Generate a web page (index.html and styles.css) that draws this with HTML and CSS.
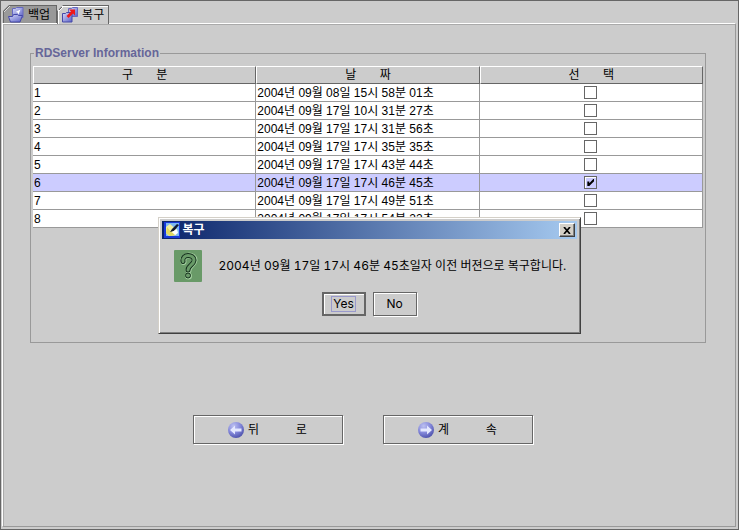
FILE: index.html
```
<!DOCTYPE html>
<html lang="ko">
<head>
<meta charset="utf-8">
<title>복구</title>
<link rel="stylesheet" href="styles.css">
</head>
<body>
<svg class="defs" width="0" height="0" aria-hidden="true">
  <defs>
    <linearGradient id="blue" x1="0" y1="0" x2="1" y2="1">
      <stop offset="0" stop-color="#d8dcfa"/>
      <stop offset="1" stop-color="#5a5fc4"/>
    </linearGradient>
    <radialGradient id="ball" cx="0.35" cy="0.25" r="0.85">
      <stop offset="0" stop-color="#bcc0f0"/>
      <stop offset="0.5" stop-color="#8488da"/>
      <stop offset="1" stop-color="#4448a4"/>
    </radialGradient>
  </defs>
</svg>
<div class="window">
  <div class="tabs" role="tablist">
    <button class="tab" type="button" role="tab" aria-selected="false">
      <svg width="16" height="16" viewBox="0 0 16 16" aria-hidden="true">
        <path d="M4.500 1.500h3l1-1h6.500v10h-10.500z" fill="url(#blue)" stroke="#6669c0"/>
        <path d="M12.500 2.500l-5 2.500 2 .5 1 2z" fill="#fff"/>
        <path d="M.5 9.500h4l1-2h4l1 1h4l-2.500 6.500H2.500z" fill="url(#blue)" stroke="#4548a8"/>
      </svg>
      <span>백업</span>
    </button>
    <button class="tab active" type="button" role="tab" aria-selected="true">
      <svg width="16" height="16" viewBox="0 0 16 16" aria-hidden="true">
        <path d="M6.500 1.500h3l1-1h5v9h-9z" fill="url(#blue)" stroke="#6669c0"/>
        <path d="M.5 6.500h3l1-1h5.500v9.500H.5z" fill="url(#blue)" stroke="#4548a8"/>
        <path d="M13 2.500v6l-2-2-4.500 4.500-2-2L9 4.500l-2-2z" fill="#f01818"/>
      </svg>
      <span>복구</span>
    </button>
  </div>
  <main class="panel">
    <fieldset class="group">
      <legend>RDServer Information</legend>
      <table class="grid">
        <thead>
          <tr><th>구       분</th><th>날       짜</th><th>선       택</th></tr>
        </thead>
        <tbody>
          <tr><td>1</td><td>2004년 09월 08일 15시 58분 01초</td><td class="pick"><input type="checkbox" aria-label="1 선택"></td></tr>
          <tr><td>2</td><td>2004년 09월 17일 10시 31분 27초</td><td class="pick"><input type="checkbox" aria-label="2 선택"></td></tr>
          <tr><td>3</td><td>2004년 09월 17일 17시 31분 56초</td><td class="pick"><input type="checkbox" aria-label="3 선택"></td></tr>
          <tr><td>4</td><td>2004년 09월 17일 17시 35분 35초</td><td class="pick"><input type="checkbox" aria-label="4 선택"></td></tr>
          <tr><td>5</td><td>2004년 09월 17일 17시 43분 44초</td><td class="pick"><input type="checkbox" aria-label="5 선택"></td></tr>
          <tr class="selected"><td>6</td><td>2004년 09월 17일 17시 46분 45초</td><td class="pick"><input type="checkbox" aria-label="6 선택" checked></td></tr>
          <tr><td>7</td><td>2004년 09월 17일 17시 49분 51초</td><td class="pick"><input type="checkbox" aria-label="7 선택"></td></tr>
          <tr><td>8</td><td>2004년 09월 17일 17시 54분 22초</td><td class="pick"><input type="checkbox" aria-label="8 선택"></td></tr>
        </tbody>
      </table>
    </fieldset>
    <div class="actions">
      <button class="button wide" type="button">
        <svg width="16" height="16" viewBox="0 0 16 16" aria-hidden="true">
          <circle cx="8" cy="8" r="8" fill="url(#ball)"/>
          <path d="M2 8l5-4.500V6.500h6.500v3H7v3z" fill="#e4e8ff"/>
        </svg>
        <span>뒤           로</span>
      </button>
      <button class="button wide" type="button">
        <svg width="16" height="16" viewBox="0 0 16 16" aria-hidden="true">
          <circle cx="8" cy="8" r="8" fill="url(#ball)"/>
          <path d="M14 8L9 3.500V6.500H2.500v3H9v3z" fill="#e4e8ff"/>
        </svg>
        <span>계           속</span>
      </button>
    </div>
  </main>
</div>
<section class="dialog" role="dialog" aria-labelledby="dialog-title">
  <header class="titlebar">
    <svg width="16" height="16" viewBox="0 0 16 16" aria-hidden="true">
      <rect width="16" height="16" fill="#1838d8"/>
      <rect x="2" y="1" width="13" height="13" fill="#7cb8f0"/>
      <path d="M2 5l4-3 7 6-1 5-7 1-3-3z" fill="#f4f0a0"/>
      <path d="M3 5l4 5 5 3-6 1-4-3z" fill="#e0d860"/>
      <path d="M8 7l5-5 2 1-5 6-4 1z" fill="#101830"/>
      <path d="M8 10l5-3 1 4-3 2z" fill="#fff"/>
    </svg>
    <h2 id="dialog-title">복구</h2>
    <button class="close" type="button" aria-label="닫기">
      <svg width="8" height="7" viewBox="0 0 8 7" aria-hidden="true">
        <path d="M1 0l6 7M7 0L1 7" stroke="#000" stroke-width="1.700"/>
      </svg>
    </button>
  </header>
  <div class="message">
    <svg width="28" height="32" viewBox="0 0 28 32" aria-hidden="true">
      <rect width="28" height="32" rx="1" fill="#699a68"/>
      <g fill="none" stroke-linecap="round">
        <path d="M9.500 12C7.500 3.500 21 4 20.500 10.500C20 15 14.500 15.500 14.500 20.500" stroke="#a4d0a0" stroke-width="6"/>
        <path d="M9 11.500C7.500 3.500 20.500 4 20 10.500C19.500 15 14 15.500 14 20" stroke="#14301c" stroke-width="5"/>
        <path d="M9 11.500C7.500 3.500 20.500 4 20 10.500C19.500 15 14 15.500 14 20" stroke="#699a68" stroke-width="3"/>
      </g>
      <circle cx="14.500" cy="26" r="3.500" fill="#a4d0a0"/>
      <circle cx="14" cy="25.500" r="2.500" fill="#699a68" stroke="#14301c"/>
    </svg>
    <p>2004년 09월 17일 17시 46분 45초일자 이전 버젼으로 복구합니다.</p>
  </div>
  <div class="choices">
    <button class="button default" type="button"><span>Yes</span></button>
    <button class="button" type="button"><span>No</span></button>
  </div>
</section>
</body>
</html>
```
FILE: styles.css
```
* {
  box-sizing: border-box;
}

body {
  margin: 0;
  background: #ccc;
  color: #000;
}

body,
button {
  font: 12px/14px Inter, "Liberation Sans", "Noto Sans CJK KR", sans-serif;
  font-variant-numeric: tabular-nums;
}

button {
  color: #000;
}

svg {
  display: block;
  flex: none;
}

.defs {
  position: absolute;
}

.window {
  display: flex;
  flex-direction: column;
  min-height: 100vh;
  padding: 4px 2px 2px 1px;
  border: 1px solid #666;
}

.tabs {
  display: flex;
  padding-left: 1px;
}

.tab {
  display: flex;
  align-items: center;
  gap: 4px;
  height: 18px;
  padding: 0 6px 0 4px;
  border: 1px solid #666;
  border-bottom: 0;
  background: linear-gradient(135deg, #666 0 5px, #ddd 5px 6px, #999 6px) border-box;
  clip-path: polygon(0 6px, 6px 0, 100% 0, 100% 100%, 0 100%);
}

.tab.active {
  z-index: 1;
  height: 19px;
  margin-bottom: -1px;
  padding: 0 4px;
  background: linear-gradient(135deg, #666 0 5px, #fff 5px 6px, #ccc 6px) border-box;
  box-shadow: inset 1px 1px #fff;
}

.panel {
  flex: 1;
  padding: 22px 29px 0 27px;
  border: 1px solid #999;
  border-top-color: #fff;
  border-left-color: #fff;
  box-shadow: inset 1px 1px #aaa;
}

.group {
  min-width: 0;
  min-height: 297px;
  margin: 0;
  padding: 6px 2px;
  border: 1px solid #999;
}

.group legend {
  margin-left: 1px;
  padding: 0 1px;
  color: #669;
  font-family: "Liberation Sans", sans-serif;
  font-weight: bold;
}

.grid {
  width: 100%;
  table-layout: fixed;
  border-collapse: separate;
  border-spacing: 0;
}

.grid,
.button.wide {
  font-family: "Liberation Sans", "Noto Sans CJK KR", sans-serif;
}

.grid th,
.grid td {
  height: 18px;
  padding: 0 1px;
  overflow: hidden;
  white-space: pre;
}

.grid th {
  border: 1px solid;
  border-color: #fff #666 #666 #fff;
  font-weight: normal;
}

.grid td {
  border: solid #999;
  border-width: 0 1px 1px 0;
  background: #fff;
}

.grid .selected td {
  background: #ccf;
}

.grid .pick {
  text-align: center;
}

.pick input {
  appearance: none;
  display: block;
  width: 13px;
  height: 13px;
  margin: 0 auto;
  border: 1px solid #666;
  box-shadow: inset 1px 1px #fff;
}

.pick input:checked::before {
  content: "";
  display: block;
  width: 7px;
  height: 7px;
  margin: 2px;
  background: #000;
  clip-path: polygon(0 35%, 28% 35%, 28% 60%, 85% 0, 100% 0, 100% 30%, 28% 100%, 0 100%);
}

.actions {
  display: flex;
  justify-content: center;
  gap: 40px;
  margin-top: 72px;
  padding-right: 11px;
}

.button {
  display: flex;
  align-items: center;
  justify-content: center;
  gap: 4px;
  min-width: 44px;
  height: 24px;
  padding: 0;
  border: 1px solid #666;
  background: #ccc;
  box-shadow: inset 1px 1px #fff, 1px 1px #fff;
  white-space: pre;
}

.button.wide {
  width: 150px;
  height: 29px;
}

.button.default {
  border-width: 2px;
  box-shadow: inset 1px 1px #fff;
}

.default span {
  padding: 0 1px;
  outline: 1px solid #99c;
}

.dialog {
  position: absolute;
  top: 217px;
  left: 50%;
  width: 423px;
  margin-left: -212px;
  padding: 2px;
  border: 1px solid;
  border-color: #d4d0c8 #404040 #404040 #d4d0c8;
  background: #ccc;
  box-shadow: inset 1px 1px #fff, inset -1px -1px #808080;
}

.titlebar {
  display: flex;
  align-items: center;
  gap: 3px;
  height: 18px;
  margin: 1px;
  padding: 0 2px;
  background: linear-gradient(90deg, #0a246a, #a6caf0);
}

.titlebar h2 {
  flex: 1;
  margin: 0;
  color: #fff;
  font-size: 12px;
}

.close {
  display: grid;
  place-items: center;
  width: 16px;
  height: 14px;
  padding: 0;
  border: 1px solid;
  border-color: #fff #404040 #404040 #fff;
  background: #d4d0c8;
  box-shadow: inset -1px -1px #808080;
}

.message {
  display: flex;
  align-items: center;
  gap: 17px;
  padding: 10px 13px;
}

.message p {
  margin: 0;
  white-space: nowrap;
}

.choices {
  display: flex;
  justify-content: center;
  gap: 7px;
  padding-bottom: 15px;
}
```
